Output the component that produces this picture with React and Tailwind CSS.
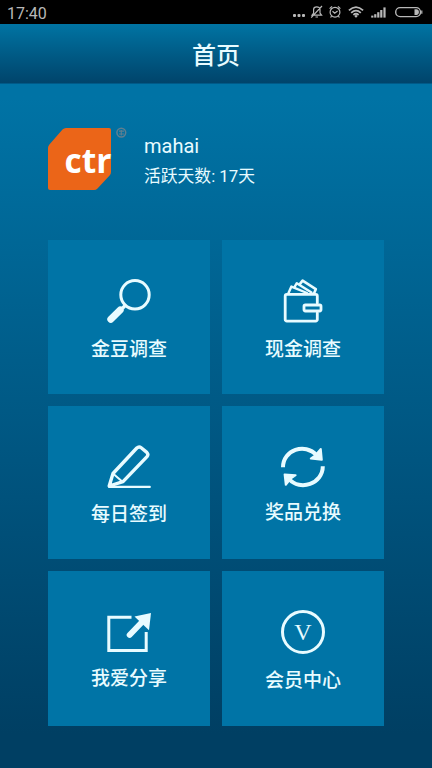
import React from "react";

const SearchIcon = () => (
  <svg className="w-11 h-11" viewBox="0 0 44 44" fill="none" stroke="currentColor">
    <circle cx="28" cy="15.8" r="14.2" strokeWidth="3" />
    <path d="M19 25.6 L15.5 29.2" strokeWidth="3.4" />
    <path d="M13.2 31 L3.8 40.2" strokeWidth="7" strokeLinecap="round" />
  </svg>
);

const WalletIcon = () => (
  <svg
    className="w-11 h-11"
    viewBox="0 0 44 44"
    fill="none"
    stroke="currentColor"
    strokeWidth="2.8"
    strokeLinejoin="round"
    strokeLinecap="round"
  >
    <path d="M36.3 24 V17 a1.6 1.6 0 0 0 -1.6 -1.6 H5.8 a1.6 1.6 0 0 0 -1.6 1.6 V40.5 a1.6 1.6 0 0 0 1.6 1.6 H34.7 a1.6 1.6 0 0 0 1.6 -1.6 V34" />
    <rect x="23" y="26" width="17" height="6" rx="1.4" />
    <path d="M7.5 14 L10.4 7.6 L26 14" strokeWidth="2.4" />
    <path d="M13.6 7.8 L15.8 4.2 L30.5 13.6" strokeWidth="2.4" />
    <path d="M19.2 4.6 L21.6 1.6 L34.8 10.2 L33.2 14" strokeWidth="2.6" />
  </svg>
);

const PencilIcon = () => (
  <svg
    className="w-11 h-11"
    viewBox="0 0 44 44"
    fill="none"
    stroke="currentColor"
    strokeWidth="3.4"
    strokeLinejoin="round"
    strokeLinecap="round"
  >
    <path d="M2.2 41 L6 28.5 L29.8 3 Q32 1 34.2 2.8 L39.8 7.4 Q41.8 9.4 40 11.6 L16 36.6 Z" />
    <path d="M6.8 29.2 L15.2 36.4" strokeWidth="2" />
    <path d="M2.2 41.9 H42.8" strokeWidth="2.2" />
  </svg>
);

const ExchangeIcon = () => (
  <svg className="w-11 h-11" viewBox="0 0 44 44" fill="none" stroke="currentColor" strokeWidth="4">
    <path d="M2 22.3 C2 4.8 24 -2.5 35.6 10" />
    <path d="M41.8 21.3 C41.8 38.8 19 46.5 8 34" />
    <path d="M39.8 4 L40.8 14.8 L29.8 13.6 L34 10.6 Z" fill="currentColor" strokeWidth="2" strokeLinejoin="round" />
    <path d="M3.6 29.4 L14.6 30.2 L9.6 33.6 L4.8 39.8 Z" fill="currentColor" strokeWidth="2" strokeLinejoin="round" />
  </svg>
);

const ShareIcon = () => (
  <svg className="w-11 h-11" viewBox="0 0 44 44" fill="none" stroke="currentColor">
    <path d="M24.5 7.3 H1.8 V40.5 H39.2 V22" strokeWidth="3" />
    <path d="M22.6 25 L36 11" strokeWidth="5.8" strokeLinecap="round" />
    <path d="M44 3 L42 20.2 L27.5 6.6 Z" fill="currentColor" stroke="none" />
  </svg>
);

const MemberIcon = () => (
  <div className="flex items-center justify-center w-11 h-11 border-[3.5px] border-current rounded-full">
    <span className="font-['Liberation_Serif',serif] text-[24px] leading-none">V</span>
  </div>
);

const menuItems = [
  { label: "金豆调查", Icon: SearchIcon, labelClass: "mt-[14px]" },
  { label: "现金调查", Icon: WalletIcon, labelClass: "mt-[14px]" },
  { label: "每日签到", Icon: PencilIcon, labelClass: "mt-[13px]" },
  { label: "奖品兑换", Icon: ExchangeIcon, labelClass: "mt-[11px]" },
  { label: "我爱分享", Icon: ShareIcon, labelClass: "mt-3" },
  { label: "会员中心", Icon: MemberIcon, labelClass: "mt-[14px]" },
];

const StatusBar = () => (
  <div className="flex items-center justify-between h-6 pl-[7px] pr-[9px] bg-black text-[#b8b8b8]">
    <span className="font-[Roboto,sans-serif] text-[16px] leading-6 pt-[3px]">17:40</span>
    <svg className="w-[131px] h-6" viewBox="292 0 131 24" fill="none" stroke="currentColor" strokeWidth="1.2">
      <g fill="currentColor" stroke="none">
        <rect x="293" y="14" width="3" height="3" rx="1" />
        <rect x="297.5" y="14" width="3" height="3" rx="1" />
        <rect x="302" y="14" width="3" height="3" rx="1" />
      </g>
      <path d="M312 15.2 H321.6 L320 13 V9.5 C320 5.9 313.6 5.9 313.6 9.5 V13 Z M315.5 17 H318 M311.2 17.6 L322 6" />
      <circle cx="335" cy="12.2" r="4.9" />
      <path d="M332.5 11.2 L334.7 13.2 L337.6 11 M329.6 8.6 L332 6.4 M340.4 8.6 L338 6.4 M331.6 16 L330.6 17.5 M338.4 16 L339.4 17.5" />
      <g strokeWidth="1.8">
        <path d="M348.9 10.4 Q356 3.8 363.1 10.4" />
        <path d="M351.2 12.8 Q356 8.4 360.8 12.8" />
        <path d="M353.4 15 Q356 12.6 358.6 15" />
      </g>
      <circle cx="356" cy="16.3" r="1.2" fill="currentColor" stroke="none" />
      <g fill="currentColor" stroke="none">
        <rect x="371.2" y="15.6" width="2.2" height="2" />
        <rect x="374.2" y="14.2" width="2.2" height="3.4" />
        <rect x="377.2" y="12.2" width="2.2" height="5.4" />
        <rect x="380.2" y="10" width="2.2" height="7.6" />
        <rect x="383.4" y="7.4" width="2.2" height="10.2" />
      </g>
      <rect x="395.7" y="7.6" width="24.8" height="9" rx="4.4" strokeWidth="1.4" />
      <path d="M414.5 9.2 H417 Q419 9.6 419 12.1 Q419 14.6 417 15 H414.5 Z" fill="currentColor" stroke="none" />
      <path d="M421.8 10.5 V13.7" />
    </svg>
  </div>
);

const Logo = () => (
  <svg className="w-20 h-16" viewBox="0 0 80 64">
    <path
      d="M18 1 H61 Q63 1 63 3 V45 Q63 47 61.6 48.6 L49.5 61.4 Q48 63 46 63 H2 Q0 63 0 61 V21 Q0 19 1.4 17.4 L14.5 2.6 Q16 1 18 1 Z"
      fill="#eb6518"
    />
    <text
      x="16.5"
      y="46"
      fill="#fff"
      textLength="47"
      lengthAdjust="spacingAndGlyphs"
      className="font-['Open_Sans',sans-serif] font-bold text-[34px]"
    >
      ctr
    </text>
    <g fill="none" stroke="#5f7f90">
      <circle cx="73.3" cy="5.6" r="4.4" strokeWidth="1.5" />
      <path d="M71 4.2 H76 M73.3 3 V8.5 M71 7 H76" strokeWidth="1.2" />
    </g>
  </svg>
);

const App = () => {
  return (
    <div className="flex flex-col w-[432px] h-[768px] overflow-hidden font-[Roboto,'Noto_Sans_CJK_SC',sans-serif] text-[#e8fbff]">
      <StatusBar />
      <header className="flex items-center justify-center h-[60px] pt-1 border-b border-[#005a88] bg-linear-to-b from-[#0074a3] to-[#00446b] text-2xl font-medium">
        <h1>首页</h1>
      </header>

      <main className="flex flex-col flex-1 px-12 bg-linear-to-b from-[#0073a5] from-2% via-[#005580] via-55% to-[#003f63] to-95%">
        <section className="flex h-[156px] pt-[43px] gap-4">
          <Logo />
          <div className="pt-1">
            <p className="text-[20px] leading-[30px]">mahai</p>
            <p className="text-[16.8px] leading-[30px]">活跃天数: 17天</p>
          </div>
        </section>

        <div className="grid grid-cols-2 grid-rows-[154px_153px_155px] gap-3">
          {menuItems.map(({ label, Icon, labelClass }) => (
            <button key={label} className="flex flex-col items-center pt-[39px] bg-[#0074a6]">
              <Icon />
              <span className={`text-[19px] leading-[26px] font-medium ${labelClass}`}>{label}</span>
            </button>
          ))}
        </div>
      </main>
    </div>
  );
};

export default App;
